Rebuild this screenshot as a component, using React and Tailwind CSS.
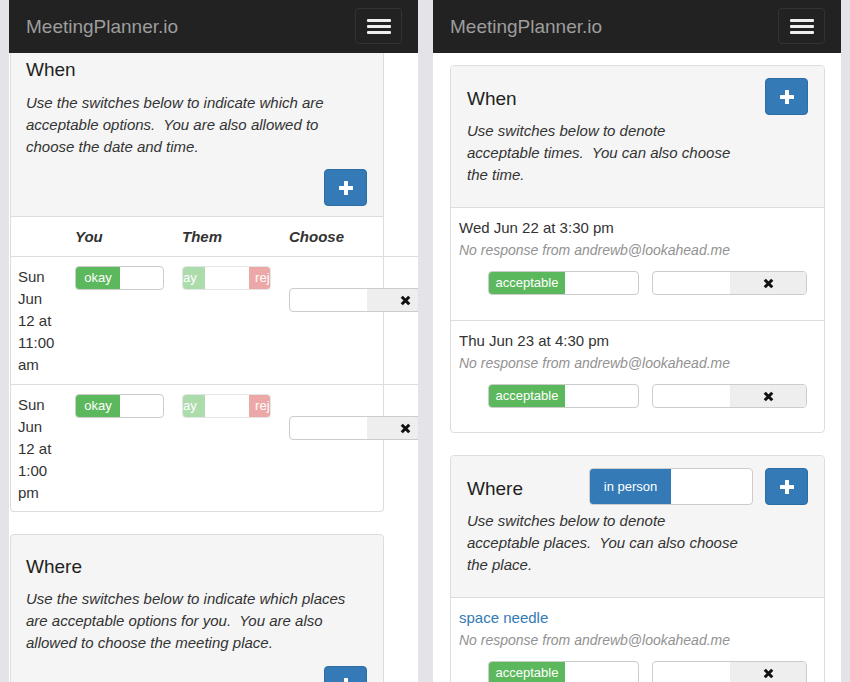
import React from 'react';

/* ── Small pieces ───────────────────────────────────────────────────────── */
function Navbar() {
  return (
    <div className="flex h-[53px] shrink-0 items-center justify-between bg-[#222] pl-[17px] pr-[16px]">
      <span className="text-[19px] leading-[22px] text-[#9d9d9d]">MeetingPlanner.io</span>
      <button className="mb-[1px] flex h-[36px] w-[47px] flex-col items-center justify-center gap-[3px] rounded-[4px] border border-[#333]">
        <span className="h-[3px] w-[24px] rounded-[1px] bg-[#eee]" />
        <span className="h-[3px] w-[24px] rounded-[1px] bg-[#eee]" />
        <span className="h-[3px] w-[24px] rounded-[1px] bg-[#eee]" />
      </button>
    </div>
  );
}

function PlusButton() {
  return (
    <button className="flex h-[37px] w-[43px] shrink-0 items-center justify-center rounded-[4px] border border-[#2e6da4] bg-[#337ab7]">
      <svg width="14" height="14" viewBox="0 0 14 14">
        <rect x="5" y="0" width="4" height="14" rx="0.5" fill="#fff" />
        <rect x="0" y="5" width="14" height="4" rx="0.5" fill="#fff" />
      </svg>
    </button>
  );
}

function RemoveIcon() {
  return (
    <svg width="11" height="11" viewBox="0 0 10 10">
      <path d="M1.6 1.6 L8.4 8.4 M8.4 1.6 L1.6 8.4" stroke="#111" strokeWidth="2.8" />
    </svg>
  );
}

function OnSwitch({ label, width, onWidth, height = 'h-[24px]', color = 'bg-[#5cb85c]' }) {
  return (
    <div className={`flex ${height} shrink-0 overflow-hidden rounded-[4px] border border-[#ccc] bg-white`} style={{ width }}>
      <span className={`flex h-full items-center justify-center text-[13px] text-white ${color}`} style={{ width: onWidth }}>
        {label}
      </span>
    </div>
  );
}

function FadedSwitch() {
  return (
    <div className="flex h-[24px] w-[89px] shrink-0 overflow-hidden rounded-[4px] border border-[#ccc] bg-white opacity-50">
      <div className="ml-[-22px] flex h-full shrink-0">
        <span className="flex h-full w-[44px] items-center justify-center bg-[#5cb85c] text-[13px] text-white">okay</span>
        <span className="h-full w-[44px] bg-white" />
        <span className="flex h-full w-[44px] items-center justify-center bg-[#d9534f] text-[13px] text-white">reject</span>
      </div>
    </div>
  );
}

function ChooseSwitch() {
  return (
    <div className="flex h-[24px] w-[155px] shrink-0 overflow-hidden rounded-[4px] border border-[#ccc] bg-white">
      <span className="h-full w-[77px]" />
      <span className="flex h-full flex-1 items-center justify-center bg-[#eee]">
        <RemoveIcon />
      </span>
    </div>
  );
}

/* ── Left phone ─────────────────────────────────────────────────────────── */
function LeftRow({ lines, last }) {
  return (
    <div className={`flex ${last ? 'pb-[7px]' : 'border-b border-[#ddd] pb-[8px]'}`}>
      <div className="w-[64px] shrink-0 pl-[7px] pt-[9px]">
        {lines.map((l) => (
          <div key={l}>{l}</div>
        ))}
      </div>
      <div className="w-[107px] shrink-0 pt-[9px]">
        <OnSwitch label="okay" width={89} onWidth={44} />
      </div>
      <div className="w-[107px] shrink-0 pt-[9px]">
        <FadedSwitch />
      </div>
      <div className="shrink-0 pt-[31px]">
        <ChooseSwitch />
      </div>
    </div>
  );
}

function LeftPhone() {
  return (
    <div className="flex w-[409px] shrink-0 flex-col overflow-hidden bg-white">
      <Navbar />

      <div className="ml-px w-[374px] rounded-b-[4px] border-x border-b border-[#ddd]">
        <div className="border-b border-[#ddd] bg-[#f5f5f5] pb-[10px] pl-[15px] pr-[16px] pt-[6px]">
          <h3 className="text-[19px] leading-[22px] text-[#222]">When</h3>
          <p className="mt-[11px] italic">
            Use the switches below to indicate which are
            <br />
            acceptable options.&nbsp; You are also allowed to
            <br />
            choose the date and time.
          </p>
          <div className="mt-[11px] flex justify-end">
            <PlusButton />
          </div>
        </div>

        <div className="w-[440px]">
          <div className="flex h-[40px] items-center border-b border-[#ddd] font-bold italic">
            <div className="w-[64px] shrink-0" />
            <div className="w-[107px] shrink-0">You</div>
            <div className="w-[107px] shrink-0">Them</div>
            <div>Choose</div>
          </div>
          <LeftRow lines={['Sun', 'Jun', '12 at', '11:00', 'am']} />
          <LeftRow lines={['Sun', 'Jun', '12 at', '1:00', 'pm']} last />
        </div>
      </div>

      <div className="ml-px mt-[22px] w-[374px] rounded-t-[4px] border border-[#ddd] bg-[#f5f5f5] pl-[15px] pr-[16px] pt-[21px]">
        <h3 className="text-[19px] leading-[22px] text-[#222]">Where</h3>
        <p className="mt-[10px] italic">
          Use the switches below to indicate which places
          <br />
          are acceptable options for you.&nbsp; You are also
          <br />
          allowed to choose the meeting place.
        </p>
        <div className="mt-[12px] flex justify-end">
          <PlusButton />
        </div>
      </div>
    </div>
  );
}

/* ── Right phone ────────────────────────────────────────────────────────── */
function RightRow({ title, link, last }) {
  return (
    <div className={`pl-[8px] pt-[9px] ${last ? 'pb-[24px]' : 'border-b border-[#ddd] pb-[25px]'}`}>
      <div className={link ? 'text-[#337ab7]' : ''}>{title}</div>
      <div className="text-[14px] italic text-[#929292]">No response from andrewb@lookahead.me</div>
      <div className="mt-[10px] flex gap-[13px] pl-[29px]">
        <OnSwitch label="acceptable" width={151} onWidth={76} />
        <ChooseSwitch />
      </div>
    </div>
  );
}

function RightPhone() {
  return (
    <div className="flex w-[408px] shrink-0 flex-col overflow-hidden bg-white">
      <Navbar />

      <div className="ml-[17px] mt-[12px] w-[375px] rounded-[4px] border border-[#ddd]">
        <div className="rounded-t-[4px] border-b border-[#ddd] bg-[#f5f5f5] pb-[21px] pl-[16px] pr-[16px] pt-[12px]">
          <div className="flex h-[37px] items-center justify-between">
            <h3 className="pt-[5px] text-[19px] leading-[22px] text-[#222]">When</h3>
            <PlusButton />
          </div>
          <p className="mt-[5px] italic">
            Use switches below to denote
            <br />
            acceptable times.&nbsp; You can also choose
            <br />
            the time.
          </p>
        </div>
        <RightRow title="Wed Jun 22 at 3:30 pm" />
        <RightRow title="Thu Jun 23 at 4:30 pm" last />
      </div>

      <div className="ml-[17px] mt-[22px] w-[375px] rounded-t-[4px] border border-[#ddd]">
        <div className="rounded-t-[4px] border-b border-[#ddd] bg-[#f5f5f5] pb-[21px] pl-[16px] pr-[16px] pt-[12px]">
          <div className="flex h-[37px] items-center">
            <h3 className="flex-1 pt-[5px] text-[19px] leading-[22px] text-[#222]">Where</h3>
            <OnSwitch label="in person" width={164} onWidth={81} height="h-[37px]" color="bg-[#337ab7]" />
            <div className="ml-[12px]">
              <PlusButton />
            </div>
          </div>
          <p className="mt-[5px] italic">
            Use switches below to denote
            <br />
            acceptable places.&nbsp; You can also choose
            <br />
            the place.
          </p>
        </div>
        <RightRow title="space needle" link />
      </div>
    </div>
  );
}

/* ── Page ───────────────────────────────────────────────────────────────── */
export default function App() {
  return (
    <div className="flex h-[682px] w-[850px] gap-[15px] overflow-hidden bg-[#e4e3e8] px-[9px] font-['Liberation_Sans',Arial,sans-serif] text-[15px] leading-[22px] text-[#333]">
      <LeftPhone />
      <RightPhone />
    </div>
  );
}
